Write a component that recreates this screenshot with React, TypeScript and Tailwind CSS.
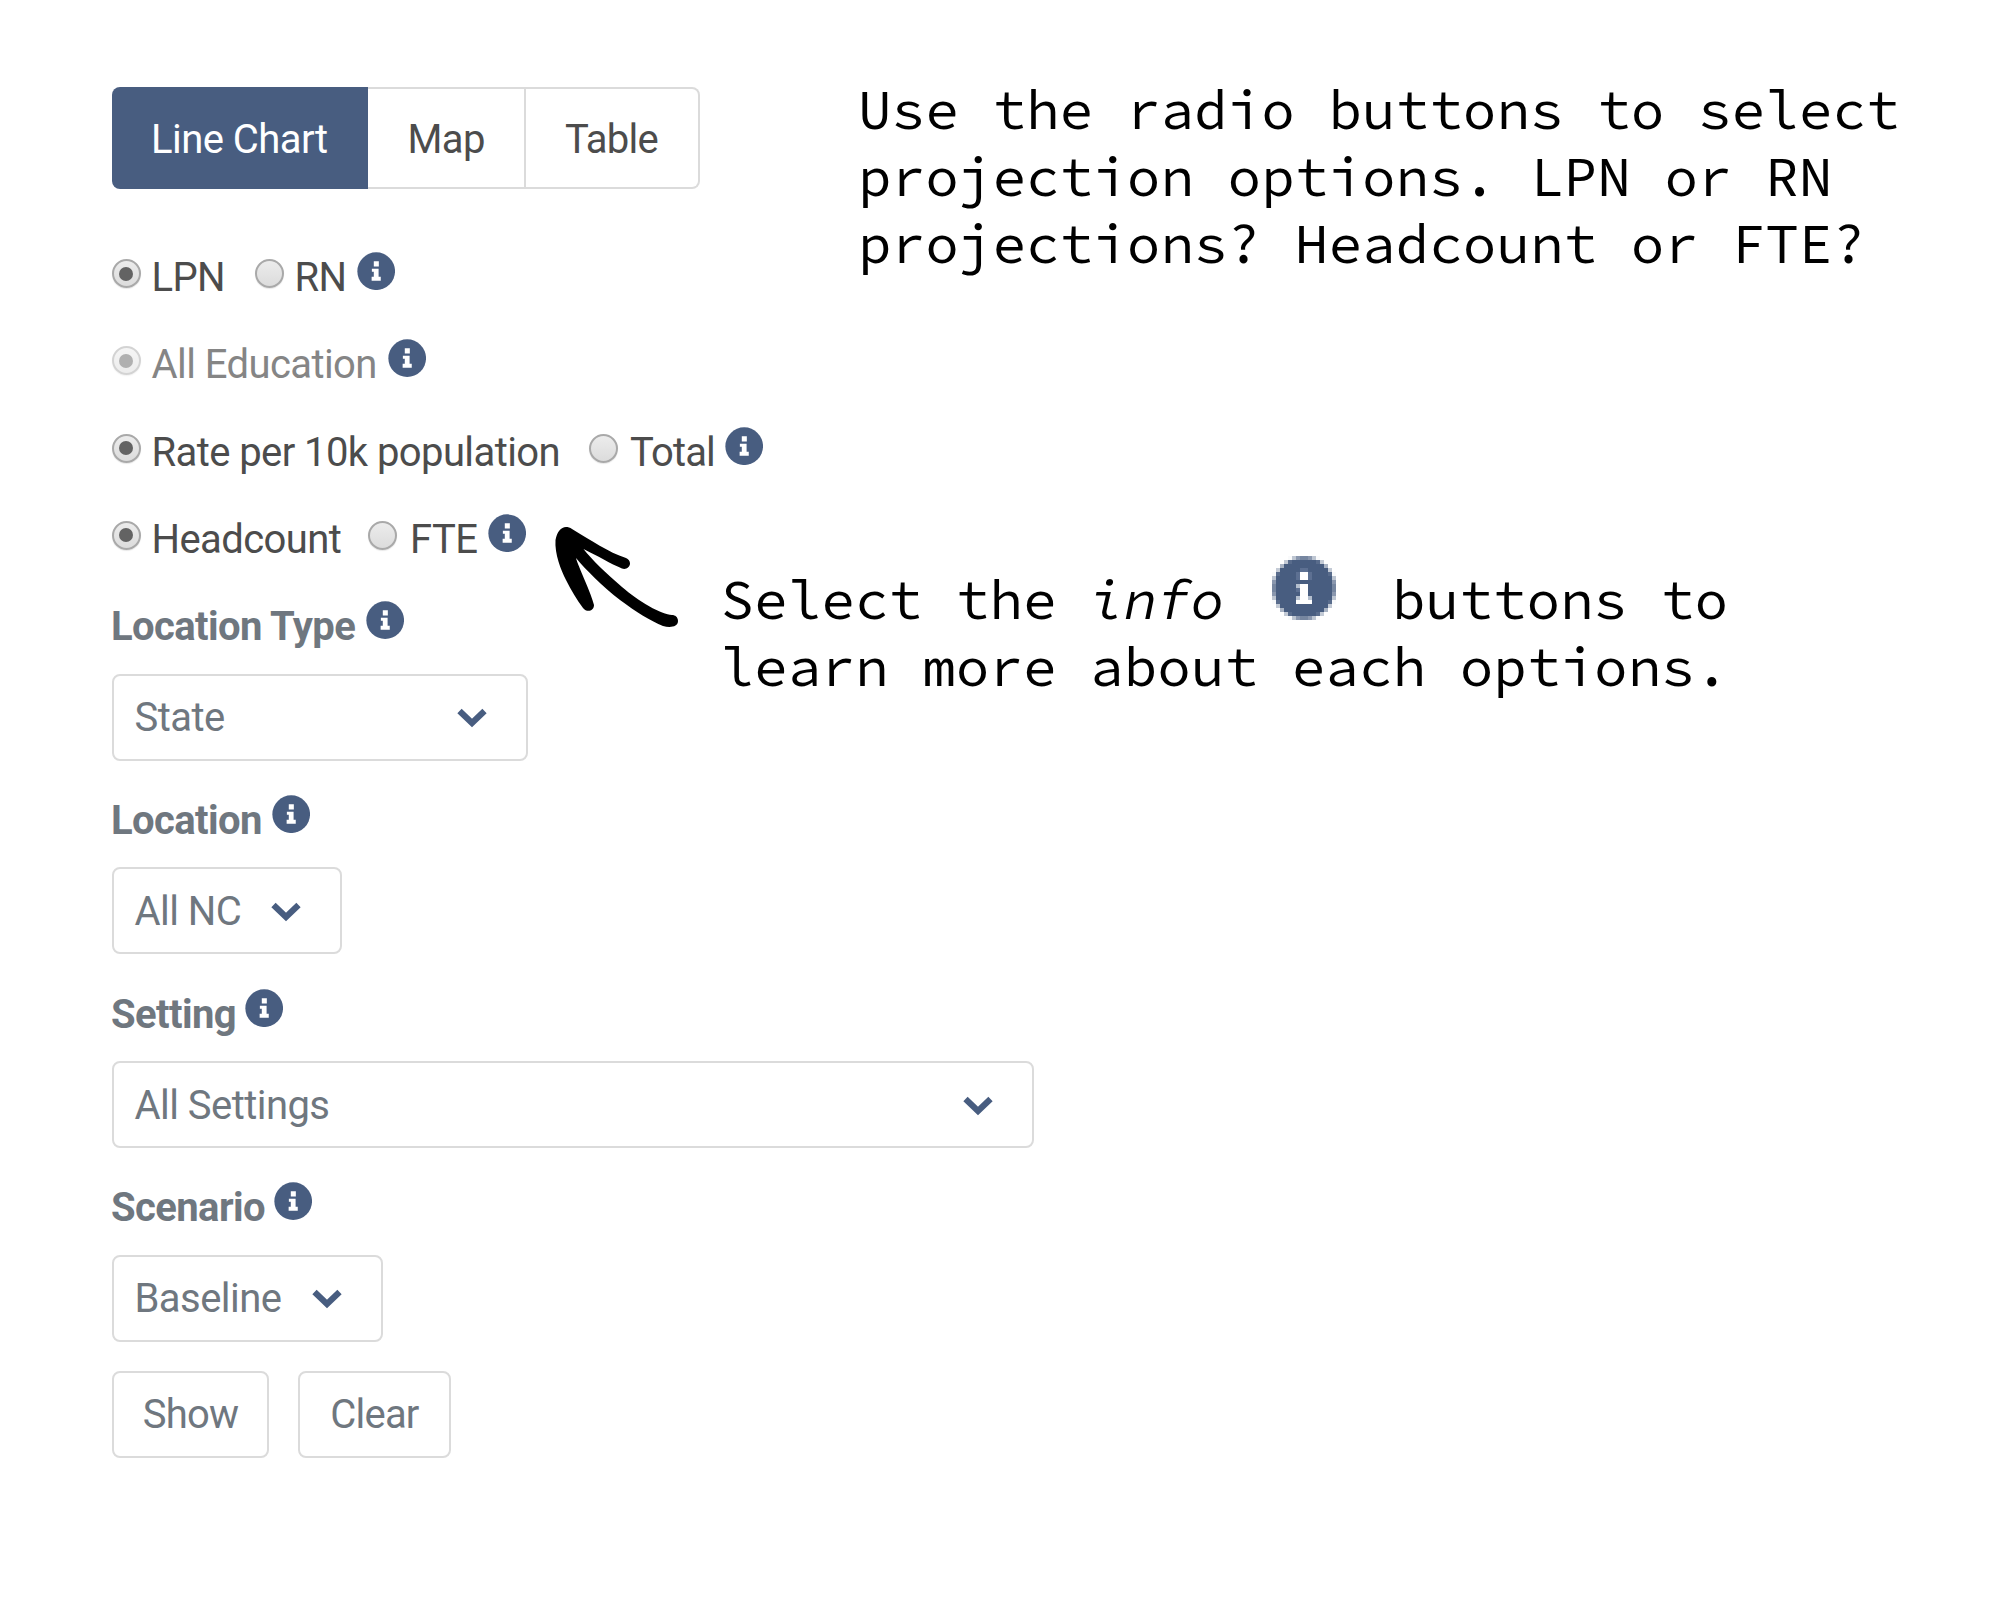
import type { ReactNode } from 'react';

const BLUE = '#485d80';

/** Information badge: a filled disc with a slab-serif "i". */
function InfoIcon({ className = '' }: { className?: string }) {
  return (
    <svg viewBox="0 0 16 16" className={`h-[38.4px] w-[38.4px] shrink-0 ${className}`} aria-label="info">
      <circle cx="8" cy="8" r="7.85" fill={BLUE} />
      <path d="M7 3.9h2.1v2.1H7zM6.2 7h2.8v3.3h.9V12H6.1v-1.7H7V8.2h-.8z" fill="#fff" />
    </svg>
  );
}

const GRID = Array.from({ length: 16 }, (_, i) => i);

/** Share of the unit cell (x, y) that lies inside the badge's disc. */
function coverage(x: number, y: number) {
  let hits = 0;
  for (let i = 0; i < 8; i++) {
    for (let j = 0; j < 8; j++) {
      if (Math.hypot(x + (i + 0.5) / 8 - 8, y + (j + 0.5) / 8 - 8) < 7.78) hits++;
    }
  }
  return hits / 64;
}

/** Enlarged badge drawn cell by cell on a 16 x 16 grid. */
function PixelInfoIcon({ className = '' }: { className?: string }) {
  return (
    <svg viewBox="0 0 16 16" shapeRendering="crispEdges" className={`h-16 w-16 shrink-0 ${className}`} aria-label="info">
      {GRID.flatMap((y) =>
        GRID.map((x) => {
          const c = coverage(x, y);
          return c > 0.02 ? <rect key={`${x}-${y}`} x={x} y={y} width="1" height="1" fill={BLUE} opacity={c} /> : null;
        }),
      )}
      <path d="M7 3h2v1H7zM6 4h1v2H6zM9 4h1v2H9zM6 8h1v1H6z" fill="#5d7092" />
      <path d="M6 7h1v1H6zM6 10h1v1H6zM9 10h1v1H9z" fill="#b4bfce" />
      <path d="M7 4h2v2H7zM7 7h2v4H7zM6 11h4v1H6z" fill="#fff" />
    </svg>
  );
}

function Chevron() {
  return (
    <svg viewBox="0 0 32 22" className="mt-0.5 h-[22px] w-8 shrink-0" aria-hidden="true">
      <path d="M3.500 4 16 16 28.500 4" fill="none" stroke={BLUE} strokeWidth="6.2" />
    </svg>
  );
}

function Radio({ checked = false, disabled = false }: { checked?: boolean; disabled?: boolean }) {
  return (
    <span
      className={`mt-[2px] flex h-[29px] w-[29px] shrink-0 items-center justify-center rounded-full border-2 border-[#a9a9a9] bg-linear-to-b from-[#ececec] to-[#dcdcdc] shadow-[0_1px_1px_#00000018] ${disabled ? 'opacity-50' : ''}`}
    >
      {checked && <span className="h-[14px] w-[14px] rounded-full bg-[#636363]" />}
    </span>
  );
}

function Row({ children }: { children: ReactNode }) {
  return (
    <div className="-ml-[0.5px] flex h-[87.3px] items-start whitespace-nowrap leading-[41px] tracking-[-0.58px] text-[#4c4c4c]">
      {children}
    </div>
  );
}

function Field({ label, labelWidth, value, width }: { label: string; labelWidth: string; value: string; width: string }) {
  return (
    <div className="mb-[39.2px]">
      <div className="-ml-px flex h-10 items-start whitespace-nowrap font-bold leading-[41px] tracking-[-0.6px]">
        <span className={labelWidth}>{label}</span>
        <InfoIcon className="-mt-[5px]" />
      </div>
      <div
        className={`mt-[27.5px] flex h-[87px] items-center justify-between whitespace-nowrap rounded-lg border-2 border-[#dbdbdb] pl-[20.5px] pr-[38px] tracking-[-0.55px] ${width}`}
      >
        <span className="pt-0.5">{value}</span>
        <Chevron />
      </div>
    </div>
  );
}

export default function App() {
  return (
    <div className="relative h-[1600px] w-[2000px] overflow-hidden bg-white">
      <main className="flex w-[1040px] flex-col items-start pl-[112px] pt-[87px] font-['Roboto','Liberation_Sans',sans-serif] text-[40px] leading-10 text-[#6f777f]">
        <div className="flex h-[102px] whitespace-nowrap text-[#4c4c4c]">
          <button className="w-64 rounded-l-lg bg-[#485d80] pl-[39px] pt-1 text-left tracking-[-0.55px] text-white">Line Chart</button>
          <button className="w-[157.500px] border-y-2 border-r-2 border-[#dbdbdb] pl-[39.500px] pt-1 text-left tracking-[-0.6px]">Map</button>
          <button className="w-[174.500px] rounded-r-lg border-y-2 border-r-2 border-[#dbdbdb] pl-[39.500px] pt-1 text-left tracking-[-0.8px]">Table</button>
        </div>

        <div className="mt-[68px]">
          <Row>
            <Radio checked />
            <span className="ml-[11px] w-[103px]">LPN</span>
            <Radio />
            <span className="ml-[11px] w-[62.500px]">RN</span>
            <InfoIcon className="-mt-[5px]" />
          </Row>
          <Row>
            <Radio checked disabled />
            <span className="ml-[11px] w-[236px] text-[#858585]">All Education</span>
            <InfoIcon className="-mt-[5px]" />
          </Row>
          <Row>
            <Radio checked />
            <span className="ml-[11px] w-[437px]">Rate per 10k population</span>
            <Radio />
            <span className="ml-[12.5px] w-[94.500px] tracking-[-0.9px]">Total</span>
            <InfoIcon className="-mt-[5px]" />
          </Row>
          <Row>
            <Radio checked />
            <span className="ml-[11px] w-[216.500px]">Headcount</span>
            <Radio />
            <span className="ml-[13px] w-[77.500px]">FTE</span>
            <InfoIcon className="-mt-[5px]" />
          </Row>
        </div>

        <Field label="Location Type" labelWidth="w-[255px]" value="State" width="w-[416px]" />
        <Field label="Location" labelWidth="w-[161px]" value="All NC" width="w-[229.5px]" />
        <Field label="Setting" labelWidth="w-[134px]" value="All Settings" width="w-[922px]" />
        <Field label="Scenario" labelWidth="w-[163px]" value="Baseline" width="w-[271px]" />

        <div className="-mt-[10px] flex gap-[29px] tracking-[-0.8px]">
          <button className="h-[87px] w-[157px] rounded-lg border-2 border-[#dbdbdb] pt-0.5">Show</button>
          <button className="h-[87px] w-[153px] rounded-lg border-2 border-[#dbdbdb] pt-0.5">Clear</button>
        </div>
      </main>

      <p className="absolute left-[858px] top-[75.500px] whitespace-pre font-['Source_Code_Pro','Liberation_Mono',monospace] text-[56px] leading-[67.2px] text-black">
        {'Use the radio buttons to select\nprojection options. LPN or RN\nprojections? Headcount or FTE?'}
      </p>

      <svg viewBox="0 0 200 150" className="absolute left-[530px] top-[500px] h-[150px] w-[200px]" aria-hidden="true">
        <path
          d="M36 27C31 27 27 32 25.500 40C24.500 54 31 70 36 80C41 90 47 100 53 108C57 113 64 111 64 105C62 95 48 66 46 58C56 70 72 86 90 100C106 112 121 121 133 126C140 128 148 127 148 121C148 117 145 115 142 115C132 115 108 101 92 87C76 73 62 60 53.500 49C66 55 81 64 92 68.500C96 70 100 67 100 63.500C100 61 98.500 59 96 58C78 52 62 41 42 29C40 27.500 38 27 36 27Z"
          fill="#000"
        />
      </svg>

      <div className="absolute left-[720.5px] top-[565.5px] whitespace-nowrap font-['Source_Code_Pro','Liberation_Mono',monospace] text-[56px] leading-[67.2px] text-black">
        <div className="flex h-[67.2px] items-start">
          <span className="w-[336px]">Select the</span>
          <em className="ml-[33.6px] w-[134.4px]">info</em>
          <PixelInfoIcon className="-mt-[9.5px] ml-[47.5px]" />
          <span className="ml-14">buttons to</span>
        </div>
        <div>learn more about each options.</div>
      </div>
    </div>
  );
}
